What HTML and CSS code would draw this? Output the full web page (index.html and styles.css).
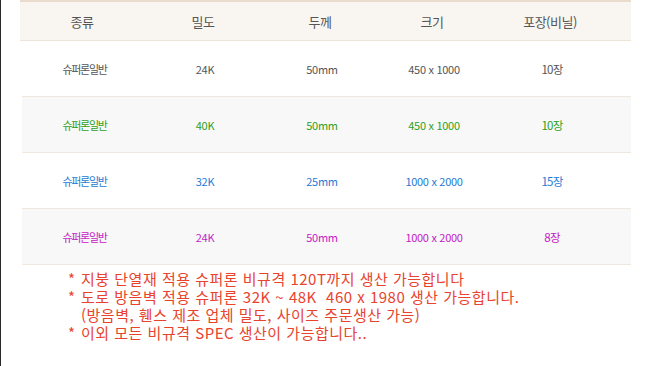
FILE: index.html
```html
<!DOCTYPE html>
<html lang="ko">
<head>
<meta charset="utf-8">
<link rel="stylesheet" href="styles.css">
</head>
<body>
<div class="page">
  <div class="spec">
    <div class="row head">
      <div>종류</div><div>밀도</div><div>두께</div><div>크기</div><div>포장(비닐)</div>
    </div>
    <div class="row gray">
      <div class="ko">슈퍼론일반</div><div>24K</div><div>50mm</div><div>450 x 1000</div><div class="ko2">10장</div>
    </div>
    <div class="row green alt">
      <div class="ko">슈퍼론일반</div><div>40K</div><div>50mm</div><div>450 x 1000</div><div class="ko2">10장</div>
    </div>
    <div class="row blue">
      <div class="ko">슈퍼론일반</div><div>32K</div><div>25mm</div><div>1000 x 2000</div><div class="ko2">15장</div>
    </div>
    <div class="row magenta alt">
      <div class="ko">슈퍼론일반</div><div>24K</div><div>50mm</div><div>1000 x 2000</div><div class="ko2">8장</div>
    </div>
  </div>
  <ul class="notes">
    <li><span class="star">*</span><span class="txt"><span class="ln">지붕 단열재 적용 슈퍼론 비규격 120T까지 생산 가능합니다</span></span></li>
    <li><span class="star">*</span><span class="txt"><span class="ln">도로 방음벽 적용 슈퍼론 32K ~ 48K &nbsp;460 x 1980 생산 가능합니다.</span><span class="ln">(방음벽, 휀스 제조 업체 밀도, 사이즈 주문생산 가능)</span></span></li>
    <li><span class="star">*</span><span class="txt"><span class="ln">이외 모든 비규격 SPEC 생산이 가능합니다..</span></span></li>
  </ul>
</div>
</body>
</html>
```
FILE: styles.css
```css
html, body {
  margin: 0;
  padding: 0;
  background: #ffffff;
}
.page {
  border-left: 1px solid #2a2a2a;
  min-height: 366px;
  box-sizing: border-box;
  padding-left: 19px;
  font-family: "Noto Sans CJK KR", "Noto Sans", sans-serif;
}
.spec {
  width: 611px;
}
.row {
  display: grid;
  grid-template-columns: 124px 118px 116px 108px 128px;
  padding-right: 17px;
  align-items: center;
  height: 55px;
  border-bottom: 1px solid #f0e7de;
  font-size: 11px;
  letter-spacing: -0.3px;
  text-align: center;
  margin-left: 2px;
}
.row > div.ko {
  font-size: 11px;
  letter-spacing: -1.3px;
  padding-left: 1px;
}
.row > div.ko2 {
  font-size: 11.5px;
  letter-spacing: -0.8px;
}
.row.head {
  margin-left: 0;
  height: 38px;
  border-top: 2px solid #eadccd;
  border-bottom: 1px solid #efe4d9;
  background: #f9f5f1;
  font-size: 13px;
  color: #555555;
  letter-spacing: -0.5px;
}
.row.alt {
  background: #f8f8f8;
}
.gray { color: #555555; }
.green { color: #2f9f1c; }
.blue { color: #1f7ad4; }
.magenta { color: #c520c5; }
.notes {
  list-style: none;
  margin: 5px 0 0 0;
  padding: 0 0 0 48px;
  color: #e8432d;
  font-size: 15px;
  line-height: 18px;
  letter-spacing: 0.5px;
}
.notes li {
  display: flex;
}
.notes .star {
  width: 13px;
  flex: none;
  display: block;
  height: 18px;
}
.notes .txt {
  display: block;
}
.notes .ln {
  display: block;
  height: 18px;
  white-space: nowrap;
}
```
